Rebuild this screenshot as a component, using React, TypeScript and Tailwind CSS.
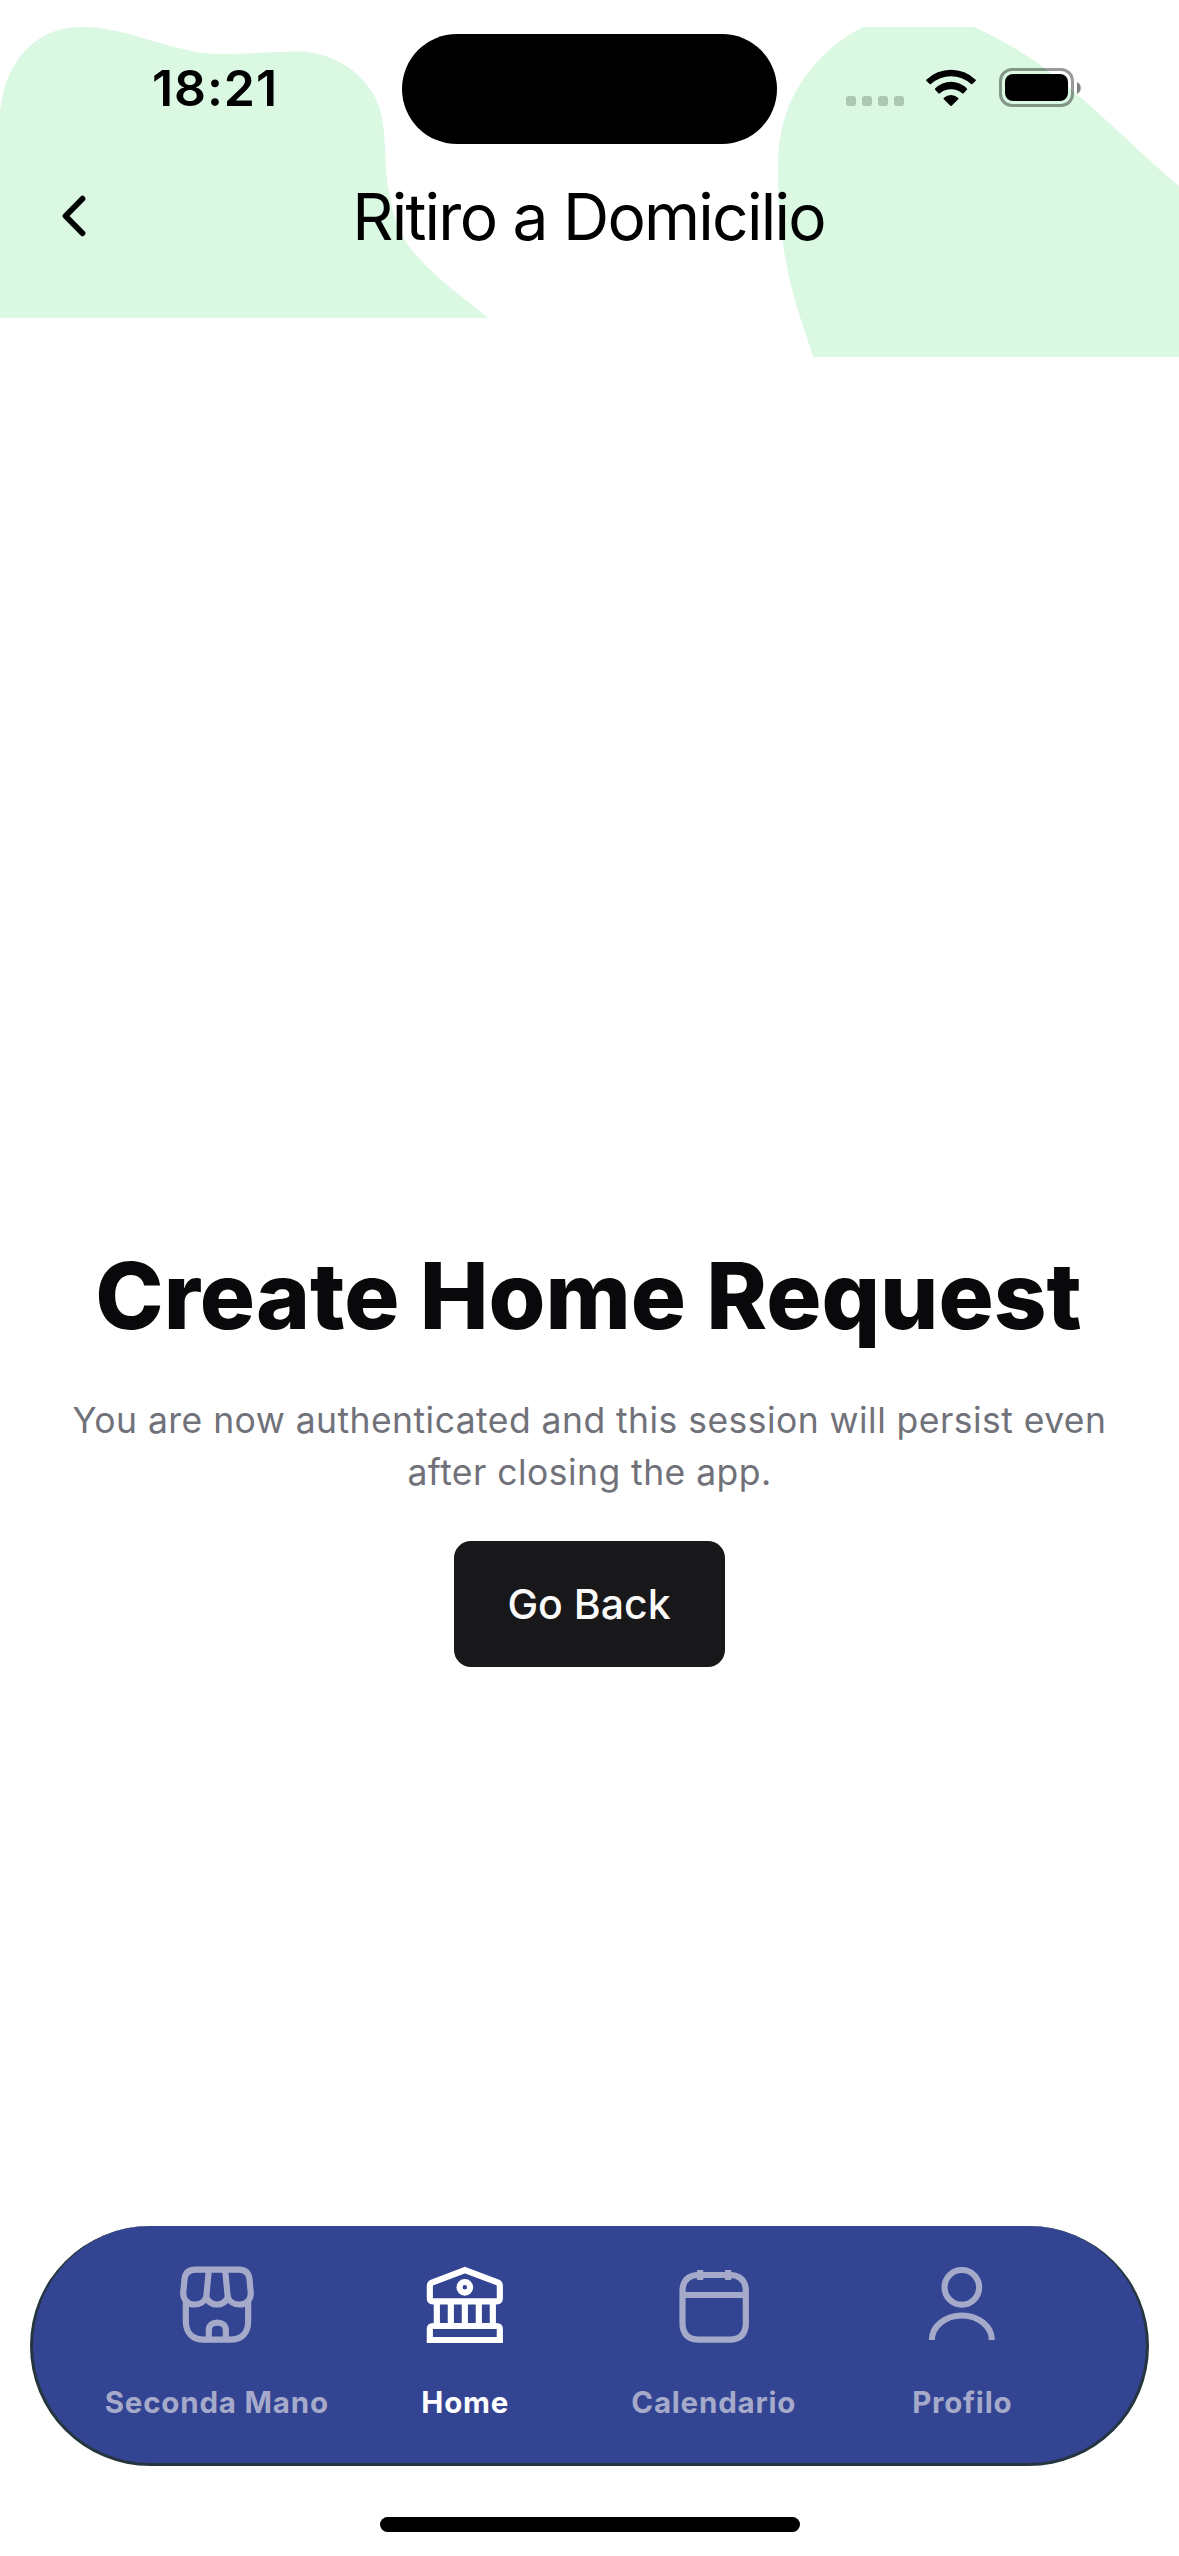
import type { ReactNode } from "react";

function HeaderBlobs() {
  return (
    <svg
      className="pointer-events-none absolute top-0 left-0"
      width="1179"
      height="380"
      viewBox="0 0 1179 380"
      fill="#daf8e2"
      aria-hidden="true"
    >
      <path d="M0 112C5 60 37 27 80 27C131 27 171 53 218 54C248 54.500 270 51.500 297 51.500C333 51.500 366 73 378 104C387 128 384 160 388 187C392 212 397 231 411 249C435 279 468 300 487.600 318H0Z" />
      <path d="M863 27H974C1004 41 1030 56 1052 74C1096 108 1134 148 1179 186V357H813.500C800 318 789 286 783.500 247C779 222 778 192 778 167C778 142 782 119 793 97C808 67 832 43 863 27Z" />
    </svg>
  );
}

function WifiIcon() {
  return (
    <svg width="50" height="37" viewBox="319 87 150 111" aria-hidden="true">
      <path d="M320 119A106 106 0 0 1 468 119Q470 120.500 468 122L459 131.500Q456.500 134 454 132A89 89 0 0 0 334 132Q331.500 134 329 131.500L320 122Q318 120.500 320 119Z" />
      <path d="M347 145A66 66 0 0 1 441 145Q444 147 441.500 149.500L432 159.500Q430 162 427.500 160A51 51 0 0 0 360.500 160Q358 162 356 159.500L346.500 149.500Q344 147 347 145Z" />
      <path d="M373 173A32 32 0 0 1 415 173Q418 175 415.500 177.500L396 197Q394 199 392 197L372.500 177.500Q370 175 373 173Z" />
    </svg>
  );
}

function Battery() {
  return (
    <div className="flex items-center gap-[3px]">
      <div className="h-[39px] w-[75px] rounded-[13px] border-[3px] border-black/40 p-[3px]">
        <div className="h-full w-full rounded-[8px] bg-black" />
      </div>
      <svg width="4" height="12" viewBox="0 0 4 12" aria-hidden="true">
        <path d="M0 0C5 2.500 5 9.500 0 12Z" fill="#000" fillOpacity="0.5" />
      </svg>
    </div>
  );
}

function StatusBar() {
  return (
    <div className="relative flex h-[166px] shrink-0 items-start">
      <div className="flex w-[402px] justify-center pt-[58px] pl-[28px]">
        <span className="text-[50px] leading-[60px] font-semibold tracking-[0.9px]">18:21</span>
      </div>
      <div className="mt-[34px] h-[110px] w-[375px] rounded-full bg-black" />
      <div className="flex flex-1 items-start pt-[68px] pl-[69px]">
        <div className="mt-[28px] flex gap-[6px]">
          {[0, 1, 2, 3].map((dot) => (
            <span key={dot} className="size-[10px] rounded-[3px] bg-black/20" />
          ))}
        </div>
        <div className="mt-[1px] ml-[22px]">
          <WifiIcon />
        </div>
        <div className="ml-[23px]">
          <Battery />
        </div>
      </div>
    </div>
  );
}

function TitleBar() {
  return (
    <header className="relative grid h-[100px] shrink-0 grid-cols-[150px_1fr_150px] items-center">
      <button className="pl-[60px]" aria-label="Indietro">
        <svg width="28" height="44" viewBox="60 194 28 44" fill="none" aria-hidden="true">
          <path
            d="M82.500 198.700L65.500 216L82.500 233.300"
            stroke="#000"
            strokeWidth="5.800"
            strokeLinecap="round"
            strokeLinejoin="round"
          />
        </svg>
      </button>
      <h1 className="pt-[2px] pr-[2px] text-center text-[64px] leading-[80px] tracking-[-1.75px]">
        Ritiro a Domicilio
      </h1>
    </header>
  );
}

function TabGlyph({ viewBox, children }: { viewBox: string; children: ReactNode }) {
  return (
    <svg
      width="84"
      height="84"
      viewBox={viewBox}
      fill="none"
      stroke="currentColor"
      strokeWidth="18.500"
      aria-hidden="true"
    >
      {children}
    </svg>
  );
}

const tabs = [
  {
    label: "Seconda Mano",
    active: false,
    icon: (
      <TabGlyph viewBox="44.500 39 252 252">
        <path d="M77 156V214C77 250 98 269 132 269H210C244 269 264 250 264 214V156" />
        <path d="M106 59H236C256 59 266 70 268 88L272 130C272 150 257 163.500 238 163.500C221 163.500 208 154 203 142C197 155 185 163.500 170.500 163.500C156 163.500 144 155 138 142C133 154 120 163.500 103 163.500C84 163.500 69 150 69 130L73 88C75 70 86 59 106 59Z" />
        <path d="M146 60L139 134C139 138 138 141 138 144M195 60L202 134C202 138 203 141 203 144" />
        <path d="M146 269V240C146 226 156 218 171 218C187 218 197 226 197 240V269" />
      </TabGlyph>
    ),
  },
  {
    label: "Home",
    active: true,
    icon: (
      <TabGlyph viewBox="39.500 39 252 252">
        <path d="M165.500 60.500L263 97Q270 100 270 107V145Q270 154 261 154H69Q60 154 60 145V107Q60 100 68 97Z" />
        <circle cx="165" cy="112" r="16" />
        <path d="M81 154V228M123 154V228M165 154V228M207 154V228M249 154V228" />
        <path d="M60 270V238Q60 228 70 228H260Q270 228 270 238V270Z" />
      </TabGlyph>
    ),
  },
  {
    label: "Calendario",
    active: false,
    icon: (
      <TabGlyph viewBox="35.500 39 252 252">
        <path d="M116 75H208C240 75 257 92 257 124V220C257 252 240 269 208 269H116C84 269 67 252 67 220V124C67 92 84 75 116 75Z" />
        <path d="M68 135H256M120 60V90M204 60V90" />
      </TabGlyph>
    ),
  },
  {
    label: "Profilo",
    active: false,
    icon: (
      <TabGlyph viewBox="30.500 39 252 252">
        <circle cx="156" cy="112" r="52" />
        <path d="M66 270A90 73.500 0 0 1 246 270" />
      </TabGlyph>
    ),
  },
];

function TabBar() {
  return (
    <nav className="mx-[30px] grid h-[240px] shrink-0 grid-cols-4 rounded-[120px] border-[3px] border-t-0 border-[#263640] bg-[#334492] px-[59.500px]">
      {tabs.map((tab) => (
        <div
          key={tab.label}
          className={
            tab.active
              ? "flex flex-col items-center pt-[37px] text-white"
              : "flex flex-col items-center pt-[37px] text-[#a6aaca]"
          }
        >
          {tab.icon}
          <span className="mt-[37px] text-[29.500px] leading-[36px] font-bold tracking-[0.8px] whitespace-nowrap">
            {tab.label}
          </span>
        </div>
      ))}
    </nav>
  );
}

export default function App() {
  return (
    <div className="relative flex h-[2556px] w-[1179px] flex-col overflow-hidden bg-white font-[Inter,sans-serif] text-black">
      <HeaderBlobs />
      <StatusBar />
      <TitleBar />
      <main className="flex flex-1 flex-col items-center pt-[982px]">
        <h2 className="pr-[2px] text-[92px] leading-[96px] font-extrabold whitespace-nowrap text-[#09090b]">
          Create Home Request
        </h2>
        <p className="mt-[51px] text-center text-[35.500px] leading-[52px] tracking-[0.45px] whitespace-nowrap text-[#71717a]">
          You are now authenticated and this session will persist even
          <br />
          after closing the app.
        </p>
        <button className="mt-[42px] flex h-[126px] w-[271px] items-center justify-center rounded-[17px] bg-[#18181b] pr-[1px] text-[41px] leading-[52px] font-medium text-[#fafafa]">
          Go Back
        </button>
      </main>
      <TabBar />
      <div className="flex h-[90px] shrink-0 justify-center pt-[51px]">
        <div className="h-[15px] w-[420px] rounded-full bg-black" />
      </div>
    </div>
  );
}
